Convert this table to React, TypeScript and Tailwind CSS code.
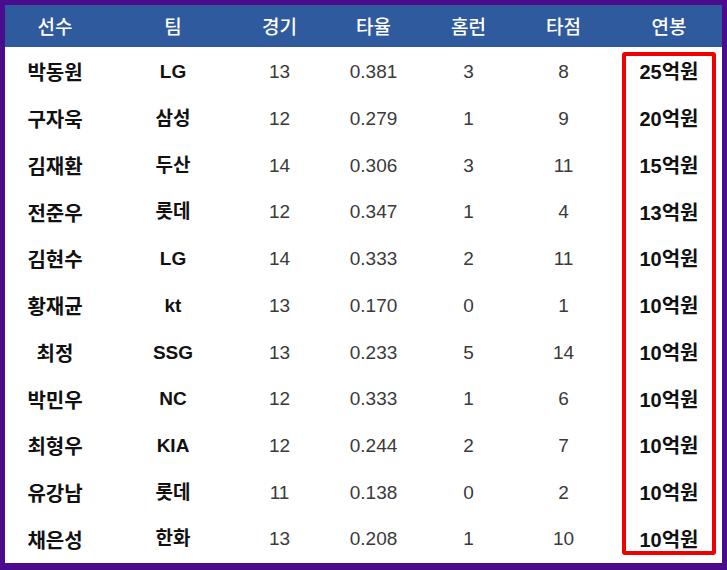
const columns = ["선수", "팀", "경기", "타율", "홈런", "타점", "연봉"];

const players = [
  ["박동원", "LG", "13", "0.381", "3", "8", "25억원"],
  ["구자욱", "삼성", "12", "0.279", "1", "9", "20억원"],
  ["김재환", "두산", "14", "0.306", "3", "11", "15억원"],
  ["전준우", "롯데", "12", "0.347", "1", "4", "13억원"],
  ["김현수", "LG", "14", "0.333", "2", "11", "10억원"],
  ["황재균", "kt", "13", "0.170", "0", "1", "10억원"],
  ["최정", "SSG", "13", "0.233", "5", "14", "10억원"],
  ["박민우", "NC", "12", "0.333", "1", "6", "10억원"],
  ["최형우", "KIA", "12", "0.244", "2", "7", "10억원"],
  ["유강남", "롯데", "11", "0.138", "0", "2", "10억원"],
  ["채은성", "한화", "13", "0.208", "1", "10", "10억원"],
];

const grid = "grid grid-cols-[109px_112px_100px_95px_95px_100px_106px] items-center";
const cell = ["pr-[9px]", "pl-[6px]", "pl-[7px]", "", "", "pr-[5px]", ""];

export default function App() {
  return (
    <div className="w-[727px] h-[570px] bg-[#4a0b8c] pt-[5px] px-[5px] pb-[7px] font-['Noto_Sans_CJK_KR',sans-serif]">
      <div className="relative flex flex-col h-full bg-white">
        <div className={`${grid} h-[42px] bg-[#2f5a9d] text-white text-[19px] font-medium`}>
          {columns.map((c, i) => (
            <div key={c} className={`text-center ${cell[i]}`}>
              {c}
            </div>
          ))}
        </div>
        <div className="flex flex-col flex-1 pt-[2px]">
          {players.map((p) => (
            <div key={p[0]} className={`${grid} flex-1`}>
              <div className={`text-center text-[20px] font-bold text-[#111] ${cell[0]}`}>{p[0]}</div>
              <div className={`text-center text-[19px] font-bold text-[#111] font-['Liberation_Sans','Noto_Sans_CJK_KR',sans-serif] ${cell[1]}`}>
                {p[1]}
              </div>
              {p.slice(2, 6).map((v, i) => (
                <div
                  key={i}
                  className={`text-center text-[19px] text-[#3a3a3a] font-['Liberation_Sans',sans-serif] ${cell[i + 2]}`}
                >
                  {v}
                </div>
              ))}
              <div className="text-center text-[20px] font-bold text-[#111] font-['Liberation_Sans','Noto_Sans_CJK_KR',sans-serif]">
                {p[6]}
              </div>
            </div>
          ))}
        </div>
        <div className="absolute left-[617px] top-[47px] w-[94px] h-[503px] border-4 border-[#f00000] rounded-[3px]" />
      </div>
    </div>
  );
}
